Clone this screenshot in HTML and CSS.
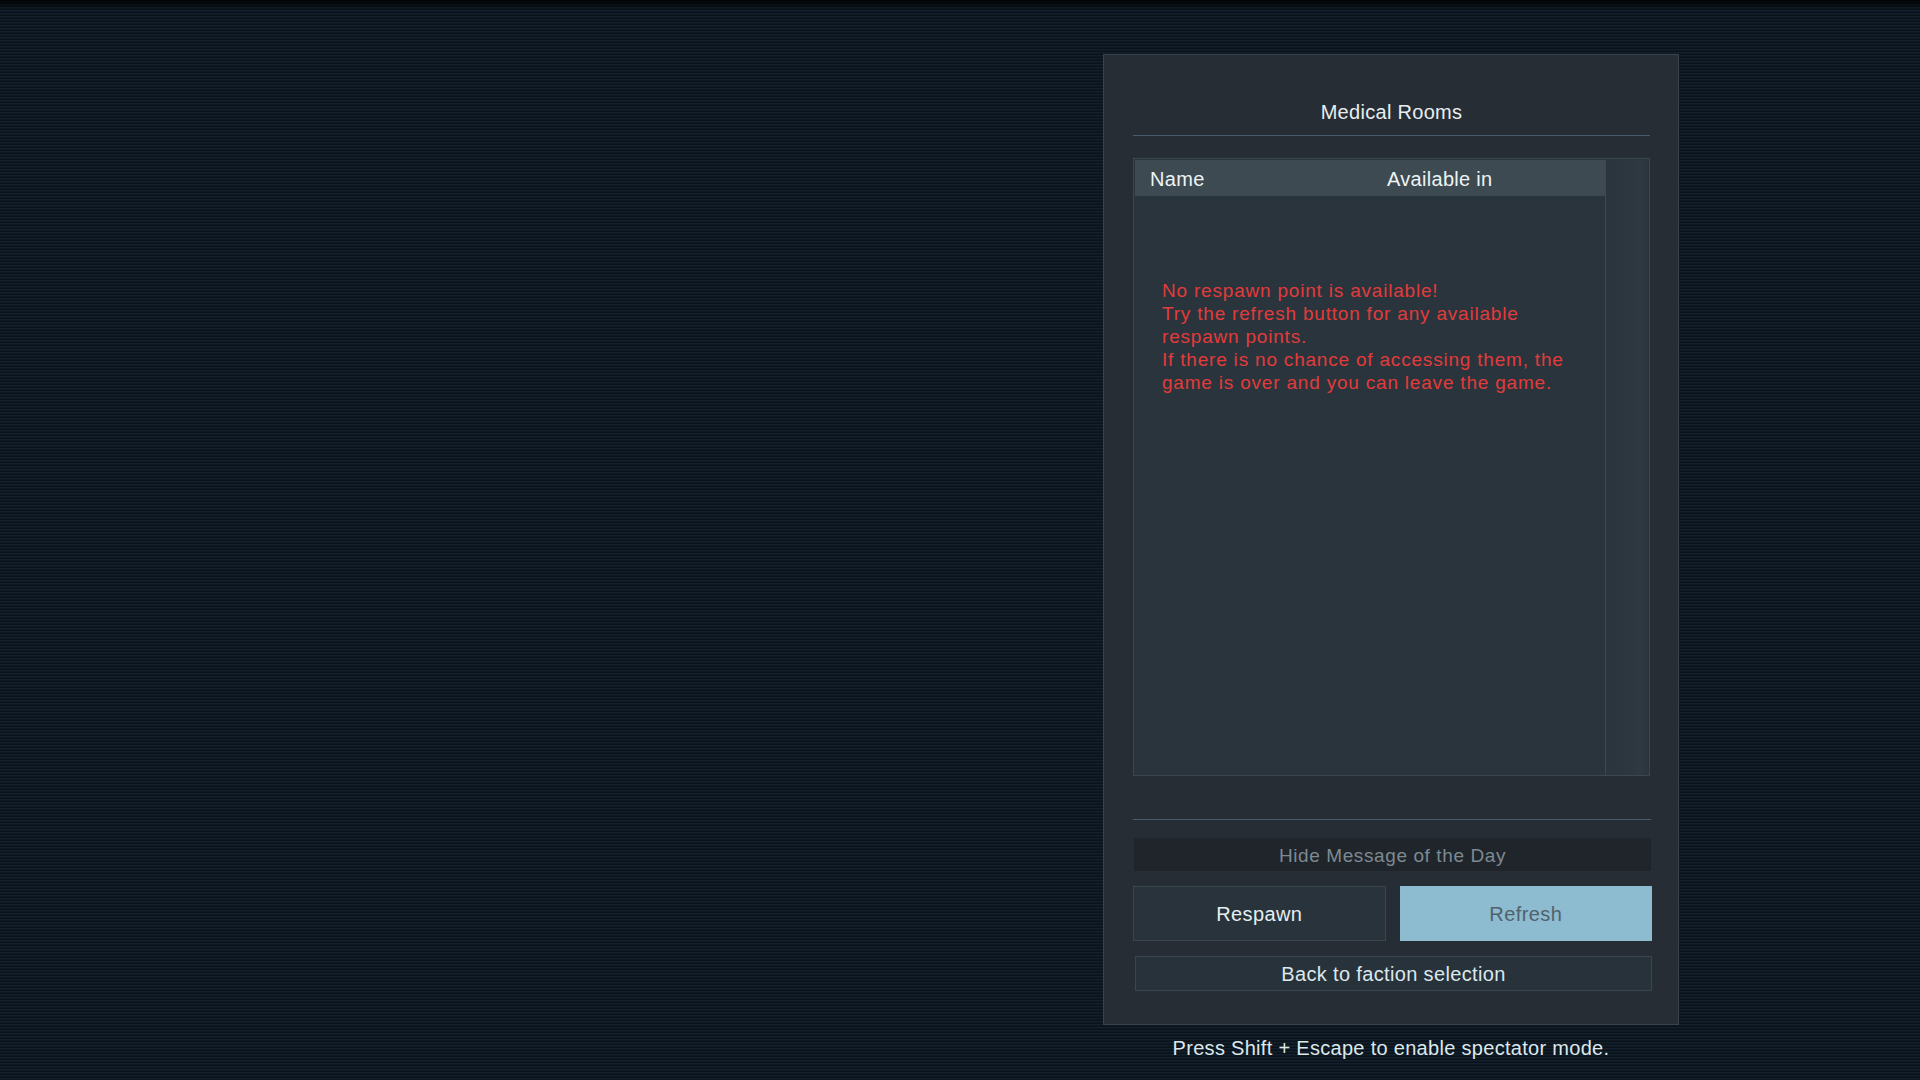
FILE: index.html
```html
<!DOCTYPE html>
<html lang="en">
<head>
  <meta charset="UTF-8" />
  <meta name="viewport" content="width=device-width, initial-scale=1.0" />
  <title>Respawn</title>
  <link rel="stylesheet" href="styles.css">
</head>
<body>
  <main class="screen">
    <div class="column">
      <section class="panel">
        <h1 class="title">Medical Rooms</h1>
        <div class="rule"></div>

        <div class="rooms">
          <div class="list">
            <div class="list-head">
              <span>Name</span>
              <span>Available in</span>
            </div>
            <div class="notice">
              No respawn point is available!<br>
              Try the refresh button for any available<br>
              respawn points.<br>
              If there is no chance of accessing them, the<br>
              game is over and you can leave the game.
            </div>
          </div>
          <div class="scrollbar"></div>
        </div>

        <div class="rule rule-low"></div>

        <button class="motd">Hide Message of the Day</button>
        <div class="actions">
          <button class="btn">Respawn</button>
          <button class="btn btn-active">Refresh</button>
        </div>
        <button class="btn btn-back">Back to faction selection</button>
      </section>
      <p class="hint">Press Shift + Escape to enable spectator mode.</p>
    </div>
  </main>
</body>
</html>
```

FILE: styles.css
```css
* {
  box-sizing: border-box;
}

html, body {
  margin: 0;
  height: 100%;
}

body {
  font-family: 'Liberation Sans', Arial, sans-serif;
  color: #e4ecef;
  background:
    linear-gradient(to bottom, rgba(0, 0, 0, 0.9) 0, rgba(0, 0, 0, 0) 10px),
    repeating-linear-gradient(to bottom, #0a1117 0, #0a1117 1px, #132030 1px, #132030 2px, #0e1822 2px, #0e1822 3px);
  overflow: hidden;
}

.screen {
  display: flex;
  height: 100vh;
  padding: 54px 0 0 1103px;
}

.column {
  width: 576px;
  display: flex;
  flex-direction: column;
}

.panel {
  height: 971px;
  background-color: #262d35;
  border: 1px solid #36434e;
  padding: 45px 26px 32px 29px;
  display: flex;
  flex-direction: column;
}

.title {
  margin: 0 2px 11px 0;
  font-size: 20px;
  font-weight: normal;
  line-height: 24px;
  letter-spacing: 0.3px;
  text-align: center;
  color: #e8eef0;
}

.rule {
  height: 1px;
  margin-right: 2px;
  background: #4a5a68;
  flex-shrink: 0;
}

.rooms {
  margin: 22px 2px 0 0;
  height: 618px;
  border: 1px solid #3a4650;
  background: #2a343c;
  display: flex;
  padding-top: 1px;
}

.list {
  flex: 1;
  border-right: 1px solid #3b4751;
  padding-left: 1px;
}

.list-head {
  display: grid;
  grid-template-columns: 237px 1fr;
  height: 36px;
  padding: 2px 0 0 15px;
  line-height: 34px;
  font-size: 20px;
  letter-spacing: 0.3px;
  background: #3d4a52;
  color: #eef3f4;
}

.notice {
  margin: 83px 0 0 27px;
  font-size: 19px;
  line-height: 23px;
  letter-spacing: 0.8px;
  color: #e23b3b;
}

.scrollbar {
  width: 43px;
  background: linear-gradient(to right, #2a353d 0, #2c3740 60%, #2e3942 80%, #2a343c 100%);
}

.rule-low {
  margin: 43px 1px 0 0;
}

button {
  font-family: 'Liberation Sans', Arial, sans-serif;
  border: none;
  padding: 0;
  cursor: pointer;
}

.motd {
  margin: 18px 1px 0 1px;
  height: 33px;
  padding-top: 2px;
  line-height: 31px;
  font-size: 19px;
  letter-spacing: 0.6px;
  background: #1f252b;
  color: #7d8a92;
}

.actions {
  margin-top: 15px;
  display: grid;
  grid-template-columns: 1fr 1fr;
  gap: 14px;
}

.btn {
  height: 55px;
  font-size: 20px;
  line-height: 55px;
  letter-spacing: 0.4px;
  background: #28333c;
  border: 1px solid #3a4550;
  color: #e6eef0;
}

.btn-active {
  background: #8dbbcf;
  border-color: #8dbbcf;
  color: #51626c;
}

.btn-back {
  margin: 15px 0 0 2px;
  height: 35px;
  padding-top: 2px;
  line-height: 31px;
  letter-spacing: 0.35px;
  background: #27323b;
  color: #dce8ec;
}

.hint {
  margin: 11px 0 0;
  font-size: 20px;
  line-height: 24px;
  letter-spacing: 0.3px;
  text-align: center;
  color: #dce8ec;
}
```
